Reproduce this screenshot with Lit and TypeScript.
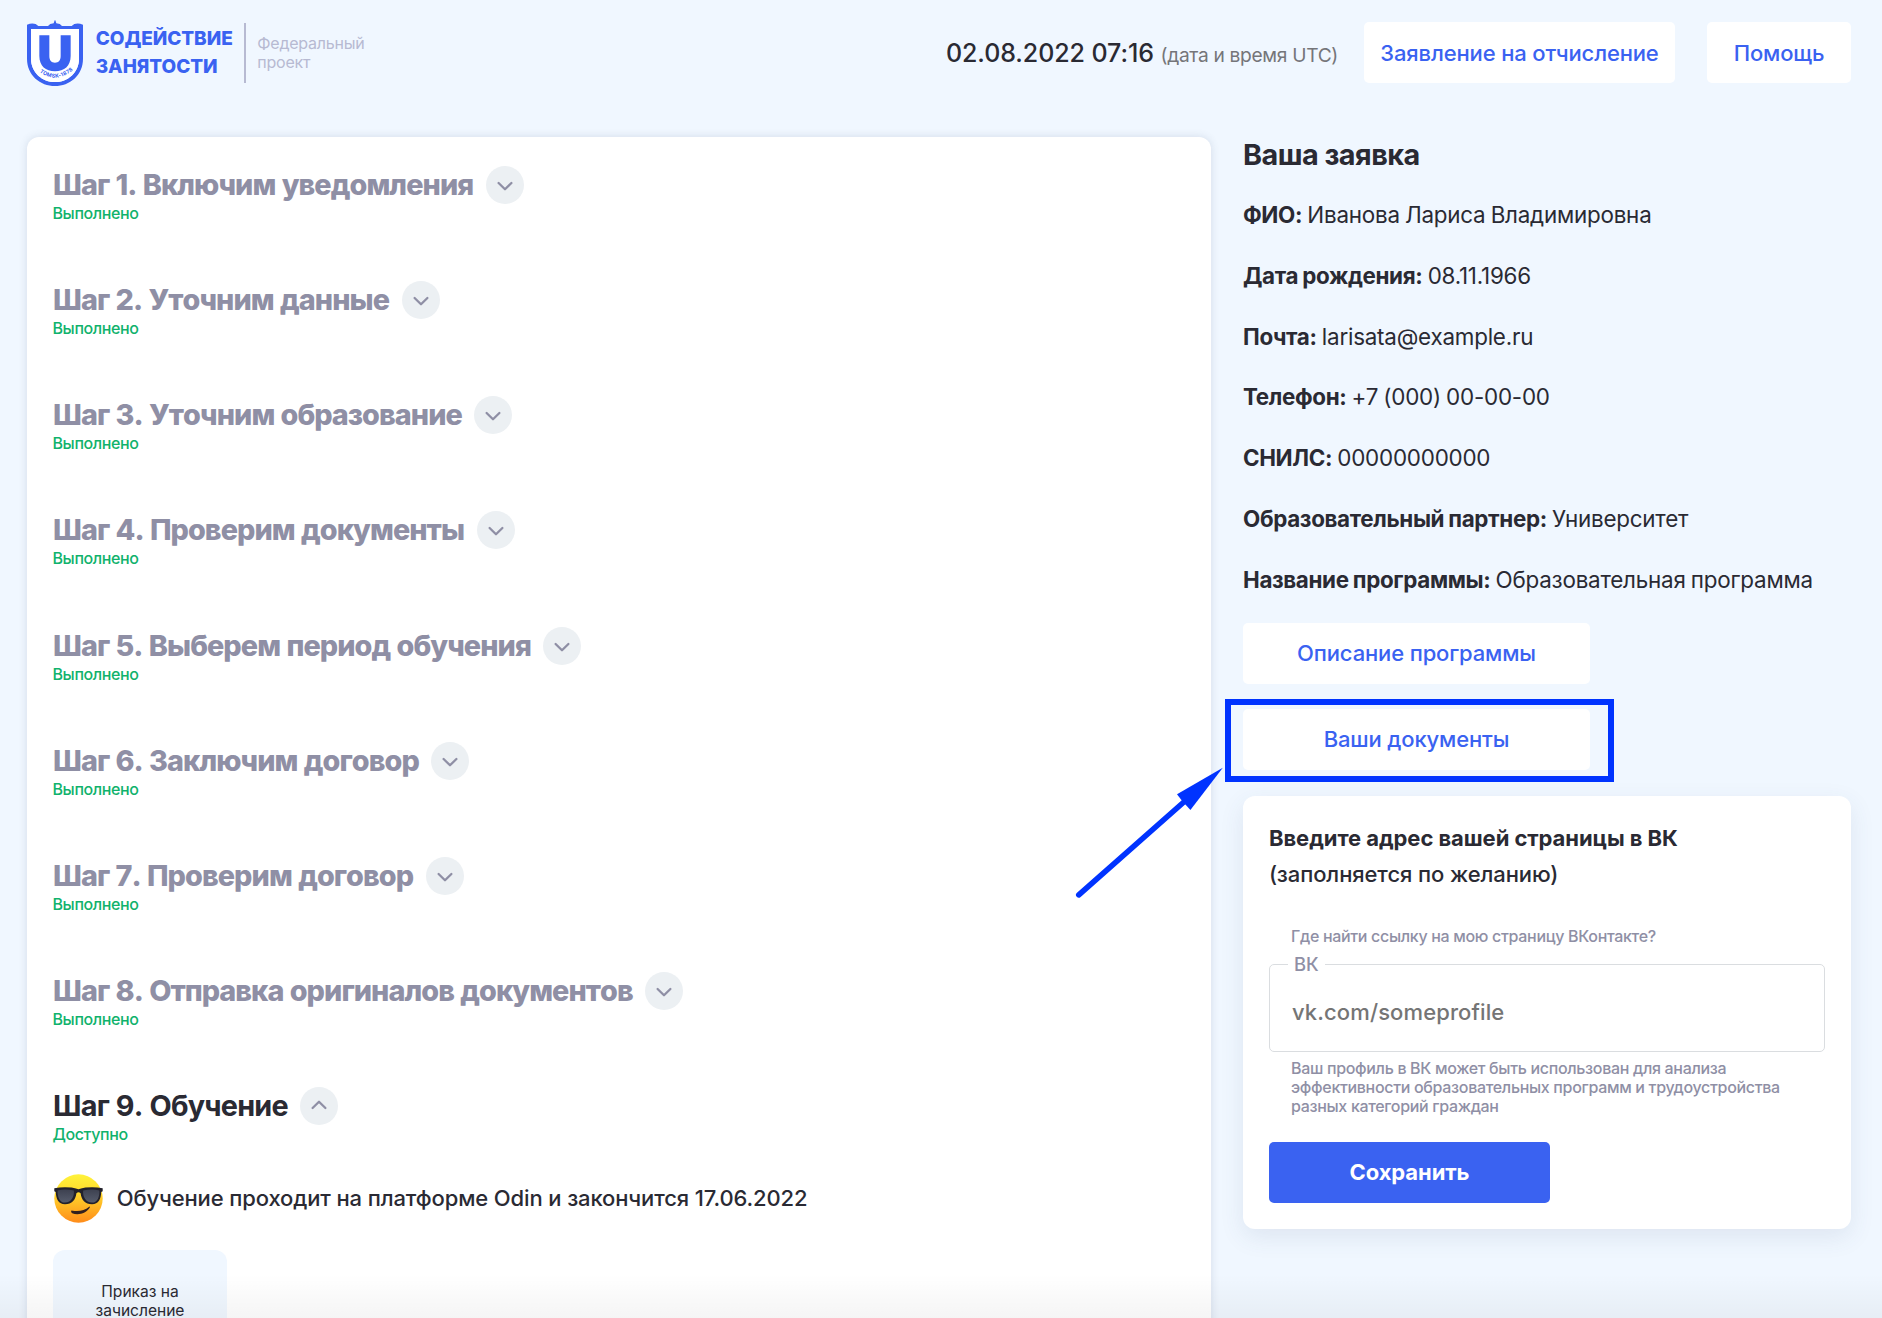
import { LitElement, html, css, svg } from "lit";
import { customElement, property } from "lit/decorators.js";
import { classMap } from "lit/directives/class-map.js";

const STEPS = [
  "Шаг 1. Включим уведомления",
  "Шаг 2. Уточним данные",
  "Шаг 3. Уточним образование",
  "Шаг 4. Проверим документы",
  "Шаг 5. Выберем период обучения",
  "Шаг 6. Заключим договор",
  "Шаг 7. Проверим договор",
  "Шаг 8. Отправка оригиналов документов",
];

const FIELDS: [string, string][] = [
  ["ФИО:", "Иванова Лариса Владимировна"],
  ["Дата рождения:", "08.11.1966"],
  ["Почта:", "larisata@example.ru"],
  ["Телефон:", "+7 (000) 00-00-00"],
  ["СНИЛС:", "00000000000"],
  ["Образовательный партнер:", "Университет"],
  ["Название программы:", "Образовательная программа"],
];

const logo = svg`
  <svg class="shield" viewBox="36 30 168 198" width="56" height="66">
    <path fill="#3a62f1" fill-rule="evenodd" d="M36 44Q50 38 62 42L70 48H99Q104 41 116 40L119 31H121L124 40Q136 41 141 48H170L178 42Q190 38 204 44V146C204 196 164 228 120 228S36 196 36 146ZM48 57V146C48 188 82 216 120 216S192 188 192 146V57Z"/>
    <path fill="#fff" d="M48 57H192V146C192 188 158 216 120 216S48 188 48 146Z"/>
    <path fill="#3a62f1" d="M73 76H103V138C103 151 109 158 120 158S137 151 137 138V76H167V138C167 168 148 184 120 184S73 168 73 138Z"/>
    <path id="arc" fill="none" d="M70 183Q120 224 173 181"/>
    <text fill="#3a62f1" font-family="Inter, sans-serif" font-size="16" font-weight="700" letter-spacing="0.9"><textPath href="#arc" startOffset="4">TOMSK-1878</textPath></text>
  </svg>`;

const emoji = svg`
  <svg class="emoji" viewBox="0 0 49 49" width="49" height="49">
    <defs>
      <linearGradient id="face" x1="0" y1="0" x2="0" y2="1"><stop offset="0" stop-color="#fff33b"/><stop offset=".35" stop-color="#ffdc2d"/><stop offset="1" stop-color="#ff8c1a"/></linearGradient>
      <linearGradient id="lens" x1="0" y1="0" x2="0" y2="1"><stop offset="0" stop-color="#3d4150"/><stop offset="1" stop-color="#565c6c"/></linearGradient>
    </defs>
    <circle cx="24.5" cy="24.5" r="24.2" fill="url(#face)"/>
    <path fill="#22212b" d="M.3 14.2Q9 12.6 17.5 13.6Q21 14.3 24.5 15.3Q28 14.3 31.5 13.6Q40 12.6 48.7 14.2V17.2L47.2 18C47 25 44.5 30.2 38 30.2C31 30.2 27.5 26 26.6 19.3Q24.5 17.3 22.4 19.3C21.5 26 18 30.2 11 30.2C4.5 30.2 2 25 1.8 18L.3 17.2Z"/>
    <path fill="url(#lens)" d="M3.6 16.4Q11 14.6 19.8 16.5C20.6 22 17.5 28.6 11 28.6C5 28.6 3.4 22 3.6 16.4ZM45.4 16.4Q38 14.6 29.2 16.5C28.4 22 31.5 28.6 38 28.6C44 28.6 45.6 22 45.4 16.4Z"/>
    <path fill="#32201f" d="M17.6 36.4Q27.5 38.8 35.2 32.7Q36.2 32.3 35.8 33.6C32.5 39.5 24 41.6 18.2 39.2Q16.3 37.2 17.6 36.4Z"/>
  </svg>`;

@customElement("step-item")
export class StepItem extends LitElement {
  @property() heading = "";
  @property() status = "Выполнено";
  @property({ type: Boolean }) open = false;

  static styles = css`
    :host { display: block; height: 115.15px; }
    .head { display: flex; align-items: center; gap: 12.5px; height: 38px; }
    .title {
      margin: 0; font-size: 28.8px; font-weight: 800; line-height: 38px; font-kerning: none;
      letter-spacing: -0.93px; word-spacing: 0.9px; color: #8f8fa5; white-space: nowrap;
    }
    .title.open { color: #2a2a33; font-weight: 700; letter-spacing: -0.78px; }
    .toggle {
      display: flex; align-items: center; justify-content: center;
      width: 38px; height: 38px; padding: 0; border: 0; border-radius: 50%; background: #ecf0f3;
    }
    .toggle.open svg { transform: rotate(180deg); }
    .status {
      margin: -1px 0 0 -0.5px; font-size: 16px; font-weight: 500; line-height: 20px;
      letter-spacing: -0.024em; color: #10b26c;
    }
  `;

  render() {
    const state = { open: this.open };
    return html`
      <div class="head">
        <h2 class=${classMap({ title: true, ...state })}>${this.heading}</h2>
        <button class=${classMap({ toggle: true, ...state })}>
          <svg width="18" height="12" viewBox="0 0 18 12"><path d="M2.6 4L9 10.3L15.4 4" fill="none" stroke="#8f8fa5" stroke-width="2.3" stroke-linecap="round" stroke-linejoin="round"/></svg>
        </button>
      </div>
      <div class="status">${this.status}</div>
    `;
  }
}

@customElement("app-root")
export class AppRoot extends LitElement {
  static styles = css`
    :host {
      display: block; position: relative; height: 1318px; overflow: hidden;
      background: #f0f7ff; color: #2a2a33;
      font-family: Inter, "Liberation Sans", sans-serif; font-size: 22px;
    }
    * { box-sizing: border-box; }
    .header { display: flex; height: 137px; padding: 20px 31px 0 27px; }
    .shield { flex: none; }
    .brand {
      margin: 5px 0 0 12.7px; width: 148.6px; font-size: 19px; font-weight: 800;
      line-height: 27.5px; letter-spacing: -0.003em; color: #3a62f1;
    }
    .project {
      margin-top: 3px; height: 60px; padding: 11px 0 0 11px; border-left: 2px solid #b7bad2;
      font-size: 16px; line-height: 19.3px; letter-spacing: -0.014em; color: #b7bad2;
    }
    .date {
      margin: 18px 26px 0 auto; font-size: 25px; font-weight: 500; line-height: 30px;
      letter-spacing: -0.003em; white-space: nowrap;
    }
    .zone { font-size: 19.2px; font-weight: 400; letter-spacing: -0.017em; color: #757579; }
    .btn {
      display: flex; align-items: center; justify-content: center; height: 61px; padding: 0;
      border: 0; border-radius: 5px; background: #fff; color: #3a62f1;
      font: 500 22px Inter, sans-serif; letter-spacing: -0.0065em;
    }
    .leave { width: 311px; margin: 2px 32px 0 0; }
    .help { width: 144px; margin-top: 2px; }
    .main { display: grid; grid-template-columns: 1184px 608px; column-gap: 32px; padding-left: 27px; align-items: start; }
    .steps {
      height: 1260px; padding: 29px 26px; border-radius: 12px; background: #fff;
      box-shadow: 0 0 8px rgba(60, 80, 120, 0.16);
    }
    .note { display: flex; align-items: center; gap: 13.5px; height: 49px; margin: -28px 0 27px 1.3px; font-weight: 500; }
    .note-text { margin-top: -1px; letter-spacing: -0.0058em; }
    .doc {
      width: 174px; height: 174px; padding: 32px 30px; border-radius: 12px; background: #f0f7ff;
      font-size: 15.6px; line-height: 19.2px; text-align: center; letter-spacing: -0.002em;
    }
    .side-title { margin: 0; padding-top: 1px; font-size: 28.8px; font-weight: 700; line-height: 34px; letter-spacing: -0.0182em; }
    .fields { margin: 13px 0 12.5px; font-size: 22.4px; }
    .field { height: 60.75px; line-height: 60.75px; white-space: nowrap; letter-spacing: -0.0098em; word-spacing: -0.9px; }
    .field b { font-weight: 700; letter-spacing: -0.0155em; }
    .wide { width: 347px; }
    .wide + .wide { margin-top: 25px; }
    .vk {
      height: 433px; margin-top: 26px; padding: 24px 26px; border-radius: 12px; background: #fff;
      box-shadow: 0 8px 24px rgba(60, 80, 120, 0.1);
    }
    .vk-title { margin: 0; font-size: 22px; font-weight: 700; line-height: 36.5px; letter-spacing: -0.003em; }
    .vk-sub { font-weight: 500; font-size: 22px; line-height: 36.5px; letter-spacing: -0.0045em; }
    .small { padding-left: 22px; font-size: 16px; font-weight: 500; letter-spacing: -0.02em; color: #8f8fa5; }
    .hint { margin-top: 33.5px; line-height: 20px; }
    .box {
      height: 98px; margin: 8px 0 0; padding: 0 22.5px 0 18px; border: 1px solid #dadde0; border-radius: 5px;
      min-width: 0;
    }
    .legend { padding: 0 7px 0 6px; font-size: 18.4px; font-weight: 500; line-height: 20px; color: #8f8fa5; letter-spacing: -0.01em; }
    .input {
      display: block; width: 100%; height: 56px; margin-top: 10px; padding: 0 0 0 4px; border: 0; outline: 0;
      background: none; font: 500 22px Inter, sans-serif; letter-spacing: 0.005em;
    }
    .input::placeholder { color: #757575; opacity: 1; }
    .explain { margin-top: 6.5px; padding-right: 20px; line-height: 19px; }
    .save { width: 281px; margin-top: 26px; background: #3a62f1; color: #fff; font-weight: 700; letter-spacing: -0.004em; }
    .frame { position: absolute; left: 1225px; top: 699px; width: 389px; height: 83px; border: 6px solid #0033ff; }
    .arrow { position: absolute; left: 1070px; top: 760px; }
    .fade {
      position: absolute; left: 0; right: 0; bottom: 0; height: 44px;
      background: linear-gradient(rgba(0, 0, 0, 0), rgba(0, 0, 0, 0.04));
    }
  `;

  render() {
    return html`
      <header class="header">
        ${logo}
        <div class="brand">СОДЕЙСТВИЕ<br />ЗАНЯТОСТИ</div>
        <div class="project">Федеральный<br />проект</div>
        <div class="date">02.08.2022 07:16 <span class="zone">(дата и время UTC)</span></div>
        <button class="btn leave">Заявление на отчисление</button>
        <button class="btn help">Помощь</button>
      </header>
      <main class="main">
        <section class="steps">
          ${STEPS.map((s) => html`<step-item .heading=${s}></step-item>`)}
          <step-item heading="Шаг 9. Обучение" status="Доступно" open></step-item>
          <div class="note">
            ${emoji}
            <span class="note-text">Обучение проходит на платформе Odin и закончится 17.06.2022</span>
          </div>
          <div class="doc">Приказ на<br />зачисление</div>
        </section>
        <aside>
          <h2 class="side-title">Ваша заявка</h2>
          <div class="fields">
            ${FIELDS.map(([k, v]) => html`<div class="field"><b>${k}</b> ${v}</div>`)}
          </div>
          <button class="btn wide">Описание программы</button>
          <button class="btn wide">Ваши документы</button>
          <section class="vk">
            <h3 class="vk-title">Введите адрес вашей страницы в ВК</h3>
            <div class="vk-sub">(заполняется по желанию)</div>
            <div class="small hint">Где найти ссылку на мою страницу ВКонтакте?</div>
            <fieldset class="box">
              <legend class="legend">ВК</legend>
              <input class="input" placeholder="vk.com/someprofile" />
            </fieldset>
            <div class="small explain">
              Ваш профиль в ВК может быть использован для анализа<br />эффективности образовательных
              программ и трудоустройства<br />разных категорий граждан
            </div>
            <button class="btn save">Сохранить</button>
          </section>
        </aside>
      </main>
      <div class="frame"></div>
      <svg class="arrow" width="160" height="145" viewBox="1070 760 160 145">
        <path d="M1078.8 894.8L1185 801" stroke="#0033ff" stroke-width="5.6" stroke-linecap="round" />
        <path d="M1222.8 767.8L1177 794.2L1181.8 800.6L1185.4 804.6L1190.4 810Z" fill="#0033ff" />
      </svg>
      <div class="fade"></div>
    `;
  }
}
